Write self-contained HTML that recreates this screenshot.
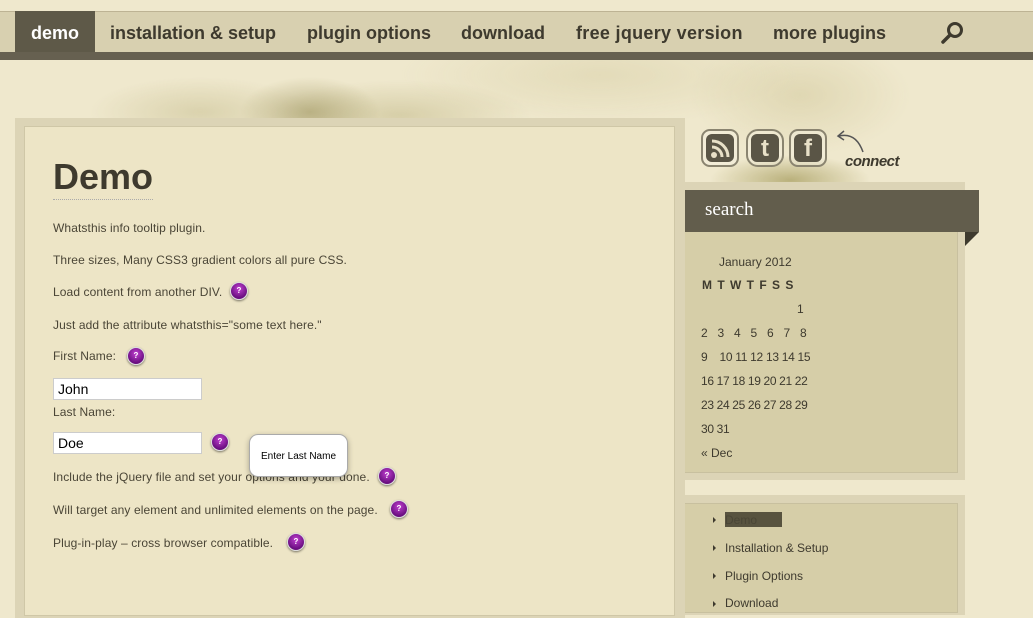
<!DOCTYPE html>
<html><head><meta charset="utf-8"><style>
*{margin:0;padding:0;box-sizing:border-box}
body{width:1033px;height:606px;overflow:hidden;position:relative;font-family:"Liberation Sans",Arial,sans-serif;color:#3e3a2e;
background:
radial-gradient(ellipse 70px 35px at 310px 112px,rgba(140,130,70,.5),transparent),
radial-gradient(ellipse 130px 35px at 400px 115px,rgba(170,160,100,.35),transparent),
radial-gradient(ellipse 110px 35px at 200px 112px,rgba(170,160,100,.3),transparent),
radial-gradient(ellipse 200px 50px at 600px 75px,rgba(200,190,140,.3),transparent),
radial-gradient(ellipse 110px 60px at 800px 95px,rgba(200,190,140,.4),transparent),
radial-gradient(ellipse 80px 25px at 790px 180px,rgba(150,140,70,.6),transparent),
#efe8cd;}
.a{position:absolute}
#nav{left:0;top:11px;width:1033px;height:41px;background:#d8d0b0;border-top:1px solid #bdb394}
#navb{left:0;top:52px;width:1033px;height:8px;background:#666050}
.ni{top:11px;height:41px;line-height:44px;font-weight:bold;font-size:18px;color:#3e3a2e}
#demo{left:15px;width:80px;background:#5e5948;color:#fff;text-align:center}
#main{left:15px;top:118px;width:670px;height:500px;background:#dcd4b6}
#inner{left:24px;top:126px;width:651px;height:490px;background:#ede5c6;border:1px solid #cfc7a7}
p.t{position:absolute;left:53px;font-size:12px;letter-spacing:.1px;color:#4a4536}
.q{position:absolute;width:18px;height:18px;border-radius:50%;background:radial-gradient(circle at 50% 35%,#c040d0,#6a0f80 70%);border:1.5px solid #ddd;box-shadow:0 1px 2px rgba(0,0,0,.5);color:#fff;font-size:8px;font-weight:bold;text-align:center;line-height:15px}
.in{position:absolute;left:53px;width:149px;height:22px;background:#fff;border:1px solid #ccc;font-size:14px;padding-left:4px;line-height:20px;color:#000}
#side1{left:685px;top:182px;width:280px;height:298px;background:#dcd4b6}
#side1i{left:685px;top:190px;width:273px;height:283px;background:#d6cea8;border:1px solid #c8c09f;border-left:none}
#sh{left:685px;top:190px;width:294px;height:42px;background:#625d4c;color:#fff;font-family:"Liberation Serif",serif;font-size:19px;line-height:40px;padding-left:20px}
#side2{left:685px;top:495px;width:280px;height:120px;background:#dcd4b6}
#side2i{left:685px;top:503px;width:273px;height:110px;background:#d6cea8;border:1px solid #c8c09f;border-left:none}
.c{position:absolute;font-size:12px;color:#3e3a2e}
.li{position:absolute;left:725px;font-size:12px;color:#3e3a2e}
.ar{position:absolute;left:713px;width:0;height:0;border-left:3px solid #3e3a2e;border-top:3px solid transparent;border-bottom:3px solid transparent}
.soc{position:absolute;top:129px;width:38px;height:38px;border-radius:9px;border:2px solid #8a8470;background:#fff3;padding:3px}
.soc div{width:100%;height:100%;border-radius:6px;background:#5a5546;color:#e8e0c8;font-weight:bold;text-align:center}
</style></head><body>
<div class="a" id="nav"></div><div class="a" id="navb"></div>
<div class="a ni" id="demo">demo</div>
<div class="a ni" style="left:110px">installation &amp; setup</div>
<div class="a ni" style="left:307px">plugin options</div>
<div class="a ni" style="left:461px">download</div>
<div class="a ni" style="left:576px;letter-spacing:.3px">free jquery version</div>
<div class="a ni" style="left:773px">more plugins</div>
<svg class="a" style="left:938px;top:18px" width="30" height="28" viewBox="0 0 30 28"><circle cx="17" cy="12" r="6.5" fill="none" stroke="#3e3a2e" stroke-width="3"/><line x1="12" y1="17" x2="5" y2="24" stroke="#3e3a2e" stroke-width="3.5" stroke-linecap="round"/></svg>

<div class="a" id="main"></div><div class="a" id="inner"></div>
<div class="a" style="left:53px;top:155px;font-size:36px;font-weight:bold;color:#3e3a2e;border-bottom:1px dotted #aaa;line-height:44px">Demo</div>
<p class="t" style="top:221px">Whatsthis info tooltip plugin.</p>
<p class="t" style="top:253px">Three sizes, Many CSS3 gradient colors all pure CSS.</p>
<p class="t" style="top:285px">Load content from another DIV.</p><div class="q" style="left:230px;top:282px">?</div>
<p class="t" style="top:318px">Just add the attribute whatsthis="some text here."</p>
<p class="t" style="top:349px">First Name:</p><div class="q" style="left:127px;top:347px">?</div>
<div class="in" style="top:378px">John</div>
<p class="t" style="top:405px">Last Name:</p>
<div class="in" style="top:432px">Doe</div><div class="q" style="left:211px;top:433px">?</div>
<p class="t" style="top:470px">Include the jQuery file and set your options and your done.</p><div class="q" style="left:378px;top:467px">?</div>
<p class="t" style="top:503px">Will target any element and unlimited elements on the page.</p><div class="q" style="left:390px;top:500px">?</div>
<p class="t" style="top:536px">Plug-in-play – cross browser compatible.</p><div class="q" style="left:287px;top:533px">?</div>
<div class="a" style="left:249px;top:434px;width:99px;height:43px;background:#fff;border-radius:9px;border:1px solid #aaa;box-shadow:0 2px 6px rgba(0,0,0,.3);font-size:10px;text-align:center;line-height:43px;color:#000">Enter Last Name</div>

<div class="soc" style="left:701px"><div><svg width="28" height="28" viewBox="0 0 28 28"><circle cx="8" cy="21" r="3" fill="#e8e0c8"/><path d="M6 13 A10 10 0 0 1 16 23 M6 7 A16 16 0 0 1 22 23" fill="none" stroke="#e8e0c8" stroke-width="3"/></svg></div></div>
<div class="soc" style="left:746px;border-radius:12px"><div style="font-size:24px;line-height:30px">t</div></div>
<div class="soc" style="left:789px"><div style="font-size:24px;line-height:30px">f</div></div>
<svg class="a" style="left:836px;top:128px" width="30" height="30"><path d="M3 8 Q20 4 27 24" fill="none" stroke="#555" stroke-width="1.5"/><path d="M8 3 L2 8 L8 12" fill="none" stroke="#555" stroke-width="1.5"/></svg>
<div class="a" style="left:845px;top:153px;font-size:15px;font-weight:bold;font-style:italic;color:#3e3a2e;letter-spacing:-.5px">connect</div>

<div class="a" id="side1"></div><div class="a" id="side1i"></div>
<div class="a" id="sh">search</div>
<div class="a" style="left:965px;top:232px;width:0;height:0;border-top:14px solid #3e3a2e;border-right:14px solid transparent"></div>
<div class="c" style="left:719px;top:255px">January 2012</div>
<div class="c" style="left:702px;top:278px;font-weight:bold;word-spacing:2px">M T W T F S S</div>
<div class="c" style="left:797px;top:302px">1</div>
<div class="c" style="left:701px;top:326px;word-spacing:6.5px">2 3 4 5 6 7 8</div>
<div class="c" style="left:701px;top:350px;letter-spacing:-.3px">9&nbsp;&nbsp;&nbsp; 10 11 12 13 14 15</div>
<div class="c" style="left:701px;top:374px;letter-spacing:-.35px">16 17 18 19 20 21 22</div>
<div class="c" style="left:701px;top:398px;letter-spacing:-.35px">23 24 25 26 27 28 29</div>
<div class="c" style="left:701px;top:422px;letter-spacing:-.35px">30 31</div>
<div class="c" style="left:701px;top:446px">« Dec</div>

<div class="a" id="side2"></div><div class="a" id="side2i"></div>
<div class="a" style="left:725px;top:512px;width:57px;height:15px;background:#58533f"></div>
<div class="ar" style="top:517px"></div><div class="li" style="top:513px;color:#4a4636">Demo</div>
<div class="ar" style="top:545px"></div><div class="li" style="top:541px">Installation &amp; Setup</div>
<div class="ar" style="top:573px"></div><div class="li" style="top:569px">Plugin Options</div>
<div class="ar" style="top:601px"></div><div class="li" style="top:596px">Download</div>
</body></html>
